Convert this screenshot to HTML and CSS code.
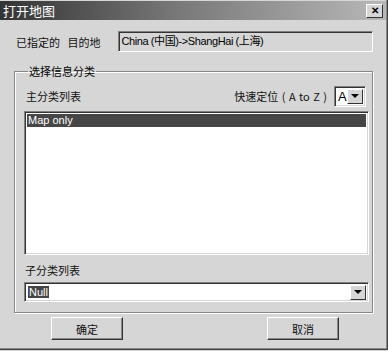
FILE: index.html
```html
<!DOCTYPE html>
<html>
<head>
<meta charset="utf-8">
<link rel="stylesheet" href="styles.css">
<title>打开地图</title>
</head>
<body>
<div class="window">
  <div class="titlebar">
    <span class="title">打开地图</span>
    <span class="close">&#x2715;</span>
  </div>
  <div class="content">
    <div class="dest-row">
      <span class="label">已指定的&nbsp;&nbsp; 目的地</span>
      <div class="field sunken">China (中国)-&gt;ShangHai (上海)</div>
    </div>
    <fieldset class="group">
      <legend>选择信息分类</legend>
      <div class="list-head">
        <span class="label">主分类列表</span>
        <div class="quick">
          <span class="label">快速定位 ( A to Z )</span>
          <div class="mini-combo sunken">
            <span>A</span>
            <span class="drop-btn"><i class="arrow"></i></span>
          </div>
        </div>
      </div>
      <div class="listbox sunken">
        <div class="item selected">Map only</div>
      </div>
      <div class="sub-label label">子分类列表</div>
      <div class="combo sunken">
        <span class="combo-text"><span class="hl">Null</span></span>
        <span class="drop-btn"><i class="arrow"></i></span>
      </div>
    </fieldset>
    <div class="buttons">
      <button class="btn">确定</button>
      <button class="btn">取消</button>
    </div>
  </div>
</div>
</body>
</html>
```

FILE: styles.css
```css
html, body { margin: 0; padding: 0; }

body {
  background: #d6d6d6;
  font-family: "Liberation Sans", "Noto Sans CJK SC", sans-serif;
  font-size: 12px;
  color: #000;
}

.window {
  width: 388px;
  height: 350px;
  box-sizing: border-box;
  background: #d6d6d6;
  border-right: 1px solid #444;
  border-bottom: 1px solid #444;
  box-shadow: inset -1px -1px 0 #888;
  display: flex;
  flex-direction: column;
}

.titlebar {
  height: 19px;
  margin: 1px 1px 0 0;
  background: linear-gradient(to right, #333 0%, #777 45%, #b8b8b8 100%);
  display: flex;
  align-items: center;
  justify-content: space-between;
  padding: 0 3px 0 3px;
}
.title {
  color: #fff;
  font-family: "Noto Sans CJK SC", sans-serif;
  font-size: 13px;
  line-height: 19px;
}
.close {
  width: 17px;
  height: 14px;
  box-sizing: border-box;
  background: #d6d6d6;
  border: 1px solid;
  border-color: #fff #333 #333 #fff;
  font-size: 10px;
  line-height: 12px;
  text-align: center;
  font-weight: bold;
}

.content {
  flex: 1;
  padding: 11px 14px 0 14px;
  display: flex;
  flex-direction: column;
}

.label {
  font-family: "Noto Sans CJK SC", sans-serif;
  font-size: 11px;
  color: #111;
}

.sunken {
  box-sizing: border-box;
  border: 1px solid;
  border-color: #808080 #fff #fff #808080;
  box-shadow: inset 1px 1px 0 #333, inset -1px -1px 0 #d6d6d6;
}

.dest-row {
  display: flex;
  align-items: center;
  height: 21px;
}
.dest-row .label { width: 103px; padding-left: 2px; }
.field {
  width: 256px;
  height: 21px;
  padding: 2px 2px;
  line-height: 15px;
  background: #d6d6d6;
  font-size: 11px;
  letter-spacing: -0.4px;
}

.group {
  margin: 11px 0 0 0;
  padding: 0 3px 10px 9px;
  width: 359px;
  box-sizing: border-box;
  border: 1px solid #888;
  box-shadow: 1px 1px 0 #fff, inset 1px 1px 0 #fff;
}
.group legend {
  font-family: "Noto Sans CJK SC", sans-serif;
  font-size: 11px;
  padding: 0 1px;
  margin-left: 4px;
}

.list-head {
  display: flex;
  align-items: center;
  justify-content: space-between;
  height: 22px;
  margin-top: 6px;
  padding-right: 3px;
}
.list-head > .label { padding-left: 2px; }
.quick { display: flex; align-items: center; gap: 7px; }
.quick .label { word-spacing: 1px; }
.mini-combo {
  width: 32px;
  height: 21px;
  background: #fff;
  display: flex;
  align-items: center;
  justify-content: space-between;
  padding: 2px 2px 2px 3px;
  font-family: "Liberation Sans", sans-serif;
  font-size: 13px;
}

.drop-btn {
  width: 16px;
  height: 15px;
  box-sizing: border-box;
  background: #d6d6d6;
  border: 1px solid;
  border-color: #fff #333 #333 #fff;
  display: flex;
  align-items: center;
  justify-content: center;
}
.arrow {
  width: 0;
  height: 0;
  border-left: 4px solid transparent;
  border-right: 4px solid transparent;
  border-top: 4px solid #000;
}

.listbox {
  margin-top: 4px;
  height: 144px;
  background: #fff;
  padding: 2px;
}
.item { height: 13px; line-height: 13px; padding-left: 1px; font-size: 11px; }
.item.selected { background: #464646; color: #fff; }

.sub-label { margin-top: 7px; padding-left: 1px; line-height: 17px; }

.combo {
  margin-top: 3px;
  height: 20px;
  background: #fff;
  display: flex;
  align-items: center;
  justify-content: space-between;
  padding: 2px;
}
.combo-text { padding-left: 1px; font-size: 11px; }
.hl { background: #464646; color: #fff; padding: 0 1px; }

.buttons {
  display: flex;
  justify-content: space-between;
  padding: 4px 34px 0 37px;
}
.btn {
  width: 72px;
  height: 23px;
  background: #d6d6d6;
  border: 1px solid;
  border-color: #fff #333 #333 #fff;
  box-shadow: inset -1px -1px 0 #888;
  font-family: "Noto Sans CJK SC", sans-serif;
  font-size: 11px;
  color: #111;
  padding: 0;
}
```
